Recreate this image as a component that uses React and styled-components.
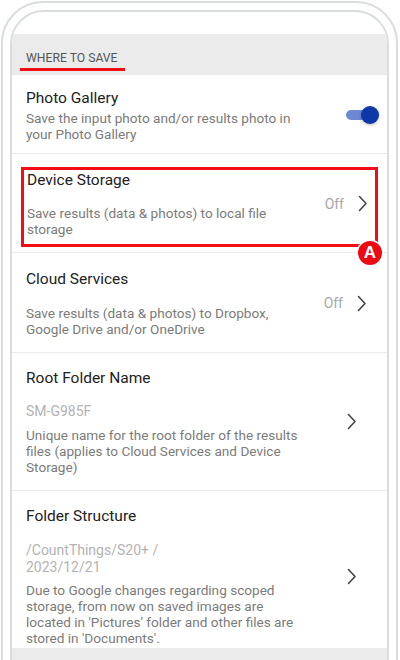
import React from 'react';
import styled, { createGlobalStyle } from 'styled-components';

const Global = createGlobalStyle`
  html, body {
    margin: 0;
    padding: 0;
    width: 400px;
    height: 660px;
    overflow: hidden;
    background: #ffffff;
  }
  body {
    font-family: Roboto, "Noto Sans", Arial, sans-serif;
  }
`;

const Phone = styled.div`
  margin: 1px 2px 0 1px;
  height: 720px;
  border: 2px solid #d9dddd;
  border-radius: 42px;
  padding: 7px;
  box-sizing: border-box;
`;

const Screen = styled.div`
  height: 100%;
  border: 2px solid #d9dddd;
  border-radius: 34px;
  overflow: hidden;
  padding-top: 22px;
  box-sizing: border-box;
  background: #ffffff;
`;

const SectionHeader = styled.div`
  background: #ebebeb;
  height: 41px;
  padding: 13px 0 0 8px;
  box-sizing: border-box;
`;

const HeaderLabel = styled.span`
  display: inline-block;
  font-size: 12.2px;
  line-height: 17px;
  color: #555555;
  padding: 0 7px 1px 6px;
  border-bottom: 3px solid #f20d15;
`;

const Row = styled.div`
  display: flex;
  align-items: center;
  padding: ${(p) => p.$pad};
  border-bottom: 1px solid #ececec;
`;

const Text = styled.div`
  width: 282px;
  flex: none;
`;

const Title = styled.div`
  font-size: 15.5px;
  line-height: 20px;
  color: #222222;
`;

const Value = styled.div`
  margin-top: ${(p) => p.$gap || '14px'};
  font-size: 14px;
  line-height: 17px;
  color: #b3b3b3;
`;

const Sub = styled.div`
  margin-top: ${(p) => p.$gap || '0px'};
  font-size: 13.6px;
  line-height: 16px;
  color: #7b7b7b;
`;

const Side = styled.div`
  flex: 1;
  display: flex;
  align-items: center;
  justify-content: flex-end;
  gap: 14px;
`;

const Off = styled.span`
  font-size: 14px;
  color: #a8a8a8;
`;

const Toggle = styled.div`
  position: relative;
  width: 29px;
  height: 10px;
  border-radius: 5px;
  background: #6f88d6;
  margin-right: 1px;
  &::after {
    content: '';
    position: absolute;
    right: -4px;
    top: -4px;
    width: 18px;
    height: 18px;
    border-radius: 50%;
    background: #0c38a8;
    box-shadow: 0 1px 3px rgba(0, 0, 0, 0.3);
  }
`;

const HighlightWrap = styled.div`
  padding: 13px 9px 5px 9px;
  border-bottom: 1px solid #ececec;
`;

const Highlight = styled.div`
  position: relative;
  display: flex;
  align-items: center;
  border: 3px solid #f20d15;
  padding: 0 7px 7px 3px;
`;

const Badge = styled.div`
  position: absolute;
  right: -7px;
  bottom: -21px;
  width: 24px;
  height: 24px;
  border-radius: 50%;
  background: #ee0a12;
  color: #ffffff;
  font-family: "Liberation Sans", Arial, sans-serif;
  font-weight: 700;
  font-size: 17px;
  line-height: 24px;
  text-align: center;
  box-shadow: 0 0 0 1.5px #ffffff;
`;

const Chevron = () => (
  <svg width="10" height="17" viewBox="0 0 10 17">
    <path d="M1.5 1.5 L8 8.5 L1.5 15.5" fill="none" stroke="#454545" strokeWidth="1.6" strokeLinecap="round" strokeLinejoin="round" />
  </svg>
);

export default function App() {
  return (
    <>
      <Global />
      <Phone>
        <Screen>
          <SectionHeader>
            <HeaderLabel>WHERE TO SAVE</HeaderLabel>
          </SectionHeader>

          <Row $pad="13px 11px 11px 14px">
            <Text>
              <Title>Photo Gallery</Title>
              <Sub $gap="2px">Save the input photo and/or results photo in your Photo Gallery</Sub>
            </Text>
            <Side>
              <Toggle />
            </Side>
          </Row>

          <HighlightWrap>
            <Highlight>
              <Text>
                <Title>Device Storage</Title>
                <Sub $gap="15px">Save results (data &amp; photos) to local file storage</Sub>
              </Text>
              <Side>
                <Off>Off</Off>
                <Chevron />
              </Side>
              <Badge>A</Badge>
            </Highlight>
          </HighlightWrap>

          <Row $pad="16px 20px 15px 14px">
            <Text>
              <Title>Cloud Services</Title>
              <Sub $gap="16px">Save results (data &amp; photos) to Dropbox, Google Drive and/or OneDrive</Sub>
            </Text>
            <Side>
              <Off>Off</Off>
              <Chevron />
            </Side>
          </Row>

          <Row $pad="15px 30px 15px 14px">
            <Text>
              <Title>Root Folder Name</Title>
              <Value $gap="14.5px">SM-G985F</Value>
              <Sub $gap="7.5px">Unique name for the root folder of the results files (applies to Cloud Services and Device Storage)</Sub>
            </Text>
            <Side>
              <Chevron />
            </Side>
          </Row>

          <Row $pad="15px 30px 2px 14px">
            <Text>
              <Title>Folder Structure</Title>
              <Value $gap="15.5px">/CountThings/S20+ /<br />2023/12/21</Value>
              <Sub $gap="6.5px">Due to Google changes regarding scoped storage, from now on saved images are located in 'Pictures' folder and other files are stored in 'Documents'.</Sub>
            </Text>
            <Side>
              <Chevron />
            </Side>
          </Row>

          <SectionHeader />
        </Screen>
      </Phone>
    </>
  );
}
